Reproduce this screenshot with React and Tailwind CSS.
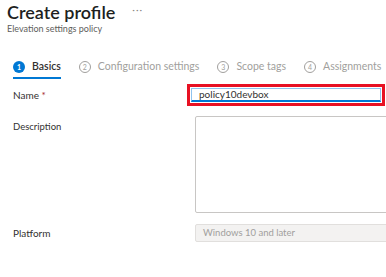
export default function App() {
    const tabs = [
        { n: 1, label: 'Basics', active: true },
        { n: 2, label: 'Configuration settings' },
        { n: 3, label: 'Scope tags' },
        { n: 4, label: 'Assignments' },
    ];

    return (
        <div className="w-[386px] h-[277px] overflow-hidden bg-white font-['Lato',sans-serif] text-[#323130]">
            <div className="pl-[7px] h-[24px] flex items-center gap-[17px] whitespace-nowrap">
                <h1 className="text-[18px] leading-[24px] font-semibold text-[#201f1e]">Create profile</h1>
                <span className="text-[10px] text-[#8a8886] tracking-[1px] -mt-[6px]">···</span>
            </div>
            <p className="pl-[7px] h-[12px] mt-[-1px] text-[9px] leading-[12px] text-[#605e5c]">Elevation settings policy</p>

            <div className="mt-[21px] pl-[13px] flex items-center h-[22px] whitespace-nowrap">
                {tabs.map((t) => (
                    <div key={t.n} className={`relative flex items-center gap-[7px] h-full mr-[18px] ${t.active ? 'text-[#323130]' : 'text-[#a19f9d]'}`}>
                        {t.active ? (
                            <span className="w-[12px] h-[12px] rounded-full bg-[#0078d4] text-white text-[7px] font-bold flex items-center justify-center">{t.n}</span>
                        ) : (
                            <span className="w-[12px] h-[12px] rounded-full border border-[#a19f9d] text-[7px] flex items-center justify-center">{t.n}</span>
                        )}
                        <span className={`text-[10.5px] ${t.active ? 'font-semibold' : ''}`}>{t.label}</span>
                        {t.active && <span className="absolute left-0 right-0 bottom-[-1px] h-[2px] bg-[#0078d4]" />}
                    </div>
                ))}
            </div>

            <div className="mt-[6px] flex items-center h-[22px]">
                <div className="w-[187px] shrink-0 pl-[13px] text-[10px] leading-[14px]">
                    Name <span className="text-[#a4262c]">*</span>
                </div>
                <div className="flex-1 h-full border-[3px] border-[#e81123] p-[1px] mr-[1px]">
                    <div className="h-full border border-[#8fc3ef] border-b-[2px] border-b-[#0078d4] flex items-center pl-[7px] text-[10px] text-[#323130]">policy10devbox</div>
                </div>
            </div>

            <div className="mt-[10px] flex">
                <div className="w-[195px] shrink-0 pl-[13px] pt-[4px] text-[9.5px] leading-[14px]">Description</div>
                <div className="flex-1 h-[97px] border border-[#c8c6c4] rounded-[2px] -mr-[2px]" />
            </div>

            <div className="mt-[11px] flex items-center h-[18px]">
                <div className="w-[195px] shrink-0 pl-[13px] text-[10px] leading-[14px]">Platform</div>
                <div className="flex-1 h-full bg-[#f3f2f1] border border-[#e1dfdd] rounded-[2px] -mr-[2px] flex items-center pl-[7px] text-[9.5px] text-[#a19f9d]">Windows 10 and later</div>
            </div>
        </div>
    );
}
